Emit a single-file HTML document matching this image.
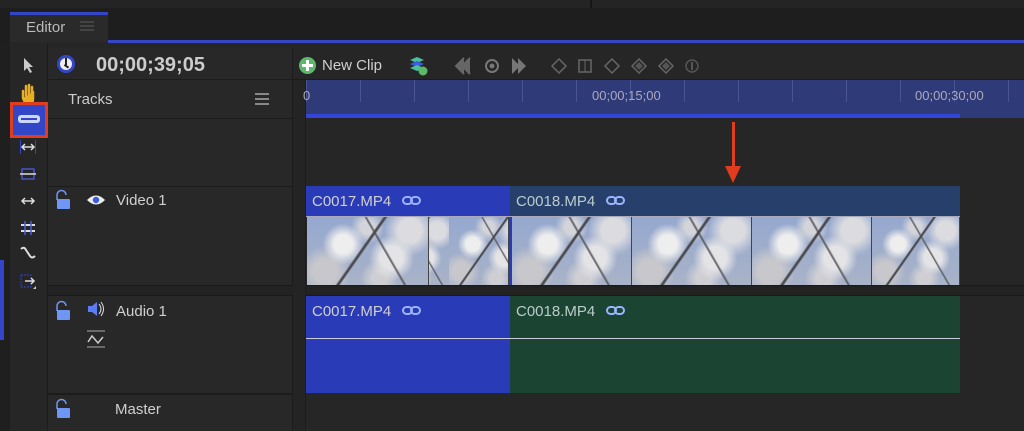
<!DOCTYPE html><html><head><style>
body{margin:0;width:1024px;height:431px;overflow:hidden;background:#262626;font-family:"Liberation Sans",sans-serif;position:relative;color:#ccc}
div{position:absolute;box-sizing:border-box}
.t{font-size:15px;color:#d0d0d0;white-space:nowrap}
.thumb{background:linear-gradient(125deg,transparent 45%,#4a4a50 46%,#4a4a50 47%,transparent 48%),linear-gradient(60deg,transparent 60%,#55555a 61%,transparent 62.5%),radial-gradient(circle at 30% 40%,#eeeeee 0 10%,transparent 22%),radial-gradient(circle at 70% 60%,#e4e4e6 0 12%,transparent 24%),radial-gradient(circle at 50% 15%,#d4d5da 0 8%,transparent 20%),radial-gradient(circle at 15% 80%,#c8c8cc 0 10%,transparent 22%),radial-gradient(circle at 85% 20%,#dcdce0 0 10%,transparent 22%),radial-gradient(circle at 60% 90%,#cfcfd3 0 8%,transparent 20%),linear-gradient(#95a8cf,#a9b3c8);border-right:1px solid #444}
</style></head><body>
<div style="left:0;top:0;width:1024px;height:42px;background:#1e1e1e"></div>
<div style="left:0;top:0;width:1024px;height:8px;background:#242424"></div>
<div style="left:590px;top:0;width:2px;height:8px;background:#151515"></div>
<div style="left:10px;top:12px;width:98px;height:30px;background:#2a2a2a;border-top:3px solid #3346c8"></div>
<div class="t" style="left:26px;top:19px;font-size:15px;color:#bbb">Editor</div>
<div style="left:80px;top:21px;width:14px;height:10px;border-top:2px solid #444;border-bottom:2px solid #444"></div>
<div style="left:80px;top:25px;width:14px;height:2px;background:#444"></div>
<div style="left:108px;top:40px;width:916px;height:3px;background:#3346c8"></div>
<div style="left:0;top:42px;width:10px;height:389px;background:#1f1f1f"></div>
<div style="left:0;top:260px;width:4px;height:80px;background:#3346c8"></div>
<div style="left:10px;top:43px;width:38px;height:388px;background:#262626;border-right:1px solid #1c1c1c"></div>
<svg style="position:absolute;left:20px;top:56px" width="16" height="300" viewBox="0 0 16 300">
<path d="M4 2 L4 15 L7 12 L10 17 L12 16 L9 11 L13 11 Z" fill="#ccc"/>
<path d="M3 42 L3 35 M6 40 V30 M9 40 V29 M12 41 V31 M3 42 Q5 48 9 48 Q13 48 13 42 L13 36" stroke="#e8b020" stroke-width="2.5" fill="#e8b020" stroke-linecap="round"/>
<path d="M2 91 H14 M5 88 L2 91 L5 94 M11 88 L14 91 L11 94" stroke="#ddd" stroke-width="1.5" fill="none"/><path d="M0.5 84 V98 M15.5 84 V98" stroke="#3346c8"/>
<rect x="2" y="113" width="12" height="10" fill="none" stroke="#4a5ee0" stroke-width="1.3"/><path d="M0 118 H16" stroke="#ddd" stroke-width="1.5"/>
<path d="M2 145 H14 M5 142 L2 145 L5 148 M11 142 L14 145 L11 148" stroke="#ddd" stroke-width="1.5" fill="none"/>
<path d="M1 169 H15 M1 175 H15" stroke="#ddd" stroke-width="2"/><path d="M5 165 V179 M11 165 V179" stroke="#4a5ee0" stroke-width="1.5"/>
<path d="M1 193 Q4 190 6 194 L10 200 Q12 203 15 200" stroke="#ddd" stroke-width="2" fill="none"/>
<rect x="1" y="219" width="10" height="12" fill="none" stroke="#3346c8" stroke-dasharray="2 1"/><path d="M5 225 H14 M11 222 L14 225 L11 228" stroke="#ddd" stroke-width="1.5" fill="none"/><path d="M13 233 L16 230 L16 233Z" fill="#ccc"/>
</svg>
<div style="left:10px;top:102px;width:38px;height:36px;border:3px solid #e03c1e;background:#3346c8"></div>
<div style="left:18px;top:115px;width:22px;height:8px;border-radius:3px;background:#cdd6ff"></div>
<div style="left:21px;top:118px;width:16px;height:2px;background:#3346c8"></div>
<div style="left:48px;top:48px;width:245px;height:383px;background:#282828;border-right:1px solid #1c1c1c"></div>
<div style="left:48px;top:79px;width:976px;height:1px;background:#1c1c1c"></div>
<div style="left:57px;top:55px;width:18px;height:18px;border-radius:50%;background:#eee;border:3px solid #3346c8"></div>
<div style="left:65px;top:58px;width:1.5px;height:7px;background:#222"></div><div style="left:65px;top:64px;width:5px;height:1.5px;background:#222;transform:rotate(35deg);transform-origin:0 0"></div>
<div class="t" style="left:96px;top:54px;font-size:20px;font-weight:bold;color:#ccc">00;00;39;05</div>
<div class="t" style="left:68px;top:91px;color:#ccc">Tracks</div>
<div style="left:255px;top:93px;width:14px;height:12px;border-top:2px solid #888;border-bottom:2px solid #888"></div>
<div style="left:255px;top:98px;width:14px;height:2px;background:#888"></div>
<div style="left:48px;top:118px;width:245px;height:1px;background:#1c1c1c"></div>
<div style="left:48px;top:186px;width:245px;height:1px;background:#1c1c1c"></div>
<div style="left:48px;top:285px;width:976px;height:11px;background:#222;border-top:1px solid #1a1a1a;border-bottom:1px solid #1a1a1a"></div>
<div style="left:48px;top:393px;width:245px;height:2px;background:#1c1c1c"></div>
<svg style="position:absolute;left:52px;top:188px" width="60" height="230">
<g><path d="M5 12 V7 A4.5 4.5 0 0 1 14 7" stroke="#6f96f5" stroke-width="1.5" fill="none"/><rect x="5" y="11" width="13" height="10" fill="#6f96f5" rx="1"/></g>
<g transform="translate(0,111)"><path d="M5 12 V7 A4.5 4.5 0 0 1 14 7" stroke="#6f96f5" stroke-width="1.5" fill="none"/><rect x="5" y="11" width="13" height="10" fill="#6f96f5" rx="1"/></g>
<g transform="translate(0,209)"><path d="M5 12 V7 A4.5 4.5 0 0 1 14 7" stroke="#6f96f5" stroke-width="1.5" fill="none"/><rect x="5" y="11" width="13" height="10" fill="#6f96f5" rx="1"/></g>
<path d="M35 12 Q44 3 53 12 Q44 21 35 12Z" fill="#eee"/><circle cx="44" cy="12" r="3.2" fill="#3a5ce0"/>
<path d="M36 118 H40 L45 114 V128 L40 124 H36Z" fill="#5b7cf5"/><path d="M47 116 Q51 121 47 126 M49 114 Q54 121 49 128" stroke="#ddd" fill="none"/>
<path d="M35 143 H53 M35 159 H53" stroke="#aaa"/><path d="M36 154 L40 148 L46 155 L51 149" stroke="#ccc" stroke-width="1.5" fill="none"/>
</svg>
<div class="t" style="left:116px;top:192px">Video 1</div>
<div class="t" style="left:116px;top:303px">Audio 1</div>
<div class="t" style="left:115px;top:401px">Master</div>
<div style="left:299px;top:57px;width:17px;height:17px;border-radius:50%;background:#5cb86a"></div>
<div style="left:306px;top:60px;width:3px;height:11px;background:#fff"></div><div style="left:302px;top:64px;width:11px;height:3px;background:#fff"></div>
<div class="t" style="left:322px;top:57px;font-size:15px">New Clip</div>
<svg style="position:absolute;left:408px;top:54px" width="300" height="24">
<path d="M2 6 L9 3 L16 6 L9 9Z" fill="#4bbf9c"/><path d="M2 10 L9 7 L16 10 L9 13Z" fill="#3a5ce0"/><path d="M2 14 L9 11 L16 14 L9 17Z" fill="#4bbf9c"/><circle cx="15" cy="17" r="4.5" fill="#5cb86a"/>
<path d="M56 4 L48 12 L56 20 M62 4 L54 12 L62 20" fill="#666" stroke="#666" stroke-width="2"/>
<circle cx="84" cy="12" r="6" fill="none" stroke="#777" stroke-width="2"/><circle cx="84" cy="12" r="2.5" fill="#777"/>
<path d="M104 4 L112 12 L104 20Z M110 4 L118 12 L110 20" fill="#777"/>
<path d="M151 5 L158 12 L151 19 L144 12Z" fill="none" stroke="#666" stroke-width="1.5"/>
<rect x="171" y="6" width="12" height="12" fill="none" stroke="#666" stroke-width="1.5"/><path d="M177 6 V18" stroke="#666"/>
<path d="M204 5 L211 12 L204 19 L197 12Z" fill="none" stroke="#666" stroke-width="1.5"/>
<path d="M231 5 L238 12 L231 19 L224 12Z" fill="none" stroke="#666" stroke-width="1.5"/><path d="M231 8 L235 12 L231 16 L227 12Z" fill="#555"/>
<path d="M258 5 L265 12 L258 19 L251 12Z" fill="none" stroke="#666" stroke-width="1.5"/><path d="M258 8 L262 12 L258 16 L254 12Z" fill="#555"/>
<circle cx="284" cy="12" r="6" fill="none" stroke="#555" stroke-width="1.5"/><path d="M284 8 V16" stroke="#555" stroke-width="2"/>
</svg>
<div style="left:293px;top:80px;width:13px;height:351px;background:#242424;border-right:1px solid #1c1c1c"></div>
<div style="left:306px;top:80px;width:718px;height:38px;background:#2f3a78"></div>
<div style="left:306px;top:80px;width:718px;height:22px;background:repeating-linear-gradient(90deg,#4a5494 0 1px,transparent 1px 54px)"></div>
<div style="left:306px;top:114px;width:654px;height:4px;background:#3346d8"></div>
<div class="t" style="left:303px;top:88px;font-size:13px;color:#aab">0</div>
<div class="t" style="left:592px;top:88px;font-size:13px;color:#aab">00;00;15;00</div>
<div class="t" style="left:915px;top:88px;font-size:13px;color:#aab">00;00;30;00</div>
<div style="left:732px;top:122px;width:3px;height:48px;background:#e03c1e"></div>
<div style="left:725px;top:166px;width:0;height:0;border-left:8px solid transparent;border-right:8px solid transparent;border-top:17px solid #e03c1e"></div>
<div style="left:306px;top:186px;width:204px;height:30px;background:#2a3bb8"></div>
<div style="left:510px;top:186px;width:450px;height:30px;background:#27406b"></div>
<div style="left:306px;top:216px;width:654px;height:1px;background:#aab"></div>
<div class="t" style="left:312px;top:193px">C0017.MP4</div>
<div class="t" style="left:516px;top:193px;color:#bcc">C0018.MP4</div>
<div class="thumb" style="left:307px;top:217px;width:122px;height:68px"></div>
<div class="thumb" style="left:429px;top:217px;width:80px;height:68px;background-position:20px 0"></div>
<div style="left:509px;top:217px;width:3px;height:68px;background:#2a3bb8"></div>
<div class="thumb" style="left:512px;top:217px;width:120px;height:68px"></div>
<div class="thumb" style="left:632px;top:217px;width:120px;height:68px"></div>
<div class="thumb" style="left:752px;top:217px;width:120px;height:68px"></div>
<div class="thumb" style="left:872px;top:217px;width:88px;height:68px"></div>
<div style="left:306px;top:296px;width:204px;height:97px;background:#2a3bb8"></div>
<div style="left:510px;top:296px;width:450px;height:97px;background:#1b4433"></div>
<div style="left:306px;top:338px;width:654px;height:1px;background:#ccd"></div>
<div class="t" style="left:312px;top:303px">C0017.MP4</div>
<div class="t" style="left:516px;top:303px;color:#bcc">C0018.MP4</div>
<svg style="position:absolute;left:402px;top:195px" width="240" height="125">
<g fill="none" stroke="#9bb4ff" stroke-width="2"><rect x="1" y="2" width="9" height="7" rx="3.5"/><rect x="9" y="2" width="9" height="7" rx="3.5"/>
<rect x="205" y="2" width="9" height="7" rx="3.5"/><rect x="213" y="2" width="9" height="7" rx="3.5"/>
<rect x="1" y="112" width="9" height="7" rx="3.5"/><rect x="9" y="112" width="9" height="7" rx="3.5"/>
<rect x="205" y="112" width="9" height="7" rx="3.5"/><rect x="213" y="112" width="9" height="7" rx="3.5"/></g>
</svg>
</body></html>
